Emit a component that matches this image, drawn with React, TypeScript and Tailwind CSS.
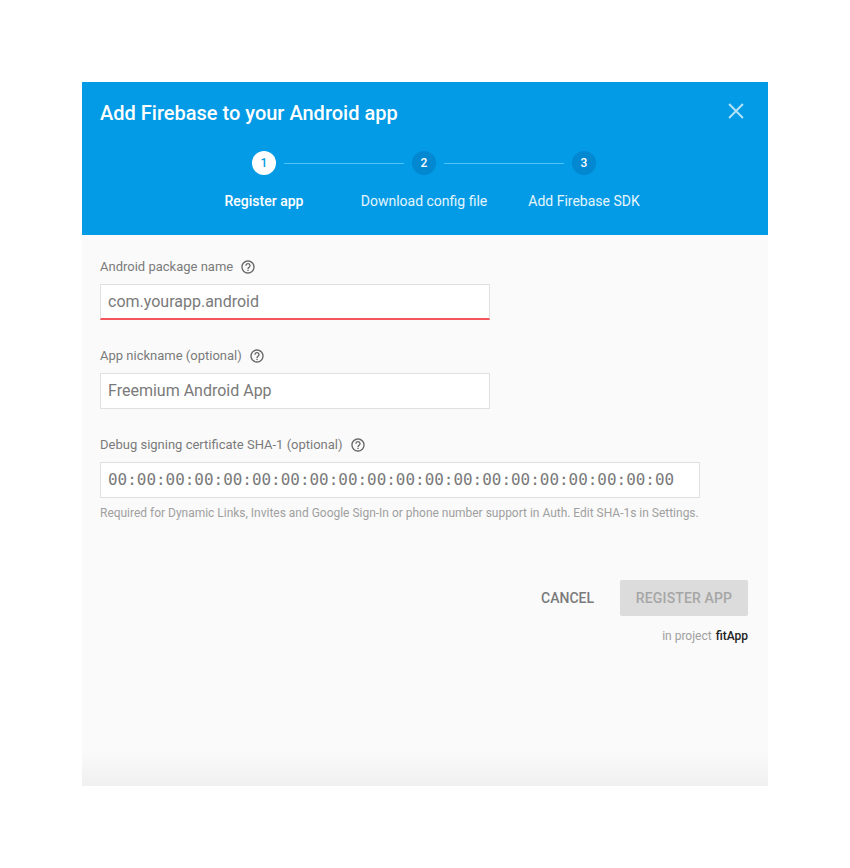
import { Fragment } from "react";

const steps = ["Register app", "Download config file", "Add Firebase SDK"];

function HelpIcon() {
  return (
    <svg viewBox="0 0 24 24" className="h-[16px] w-[16px] shrink-0 fill-[#666666]">
      <path d="M11 18h2v-2h-2v2zm1-16C6.48 2 2 6.48 2 12s4.48 10 10 10 10-4.48 10-10S17.52 2 12 2zm0 18c-4.41 0-8-3.59-8-8s3.59-8 8-8 8 3.59 8 8-3.59 8-8 8zm0-14c-2.21 0-4 1.79-4 4h2c0-1.1.9-2 2-2s2 .9 2 2c0 2-3 1.75-3 5h2c0-2.25 3-2.5 3-5 0-2.21-1.79-4-4-4z" />
    </svg>
  );
}

function Label({ text }: { text: string }) {
  return (
    <div className="flex h-[18px] items-center gap-[7px] text-[13px] leading-[18px] text-[#7a7a7a]">
      <span>{text}</span>
      <HelpIcon />
    </div>
  );
}

export default function App() {
  return (
    <div className="min-h-[868px] bg-white pt-[82px] pl-[82px] font-['Roboto',sans-serif]">
      <div className="flex h-[704px] w-[686px] flex-col bg-gradient-to-b from-[#fafafa] from-[95%] to-[#f0f0f0]">
        <div className="h-[153px] shrink-0 bg-[#039be5] text-white">
          <div className="flex items-start justify-between pt-[17px] pr-[24px] pl-[18px]">
            <h1 className="text-[20px] leading-[28px] font-medium">Add Firebase to your Android app</h1>
            <svg viewBox="0 0 15 15" className="mt-[4px] h-[16px] w-[16px] stroke-white/70 stroke-[1.9]">
              <path d="M1 1l13 13M14 1L1 14" fill="none" />
            </svg>
          </div>
          <div className="mt-[24px] mr-[2px] flex items-center justify-center">
            {steps.map((step, i) => (
              <Fragment key={step}>
                {i > 0 && <div className="mx-[8px] h-px w-[120px] bg-[#4fc3f7]" />}
                <div
                  className={
                    i === 0
                      ? "flex h-[24px] w-[24px] items-center justify-center rounded-full bg-white text-[12px] font-medium text-[#039be5]"
                      : "flex h-[24px] w-[24px] items-center justify-center rounded-full bg-[#0288d1] text-[12px] font-medium text-white"
                  }
                >
                  {i + 1}
                </div>
              </Fragment>
            ))}
          </div>
          <div className="mt-[16px] mr-[2px] flex justify-center">
            {steps.map((step, i) => (
              <div
                key={step}
                className={
                  i === 0
                    ? "w-[160px] text-center text-[14px] leading-[20px] font-medium whitespace-nowrap"
                    : "w-[160px] text-center text-[14px] leading-[20px] whitespace-nowrap text-white/90"
                }
              >
                {step}
              </div>
            ))}
          </div>
        </div>

        <div className="flex flex-col px-[18px] pt-[23px]">
          <Label text="Android package name" />
          <div className="mt-[8px] flex h-[36px] w-[390px] items-center border border-[#e0e0e0] border-b-2 border-b-[#f4555a] bg-white pl-[7px] text-[16px] text-[#7a7a7a]">
            com.yourapp.android
          </div>

          <div className="mt-[27px]">
            <Label text="App nickname (optional)" />
          </div>
          <div className="mt-[8px] flex h-[36px] w-[390px] items-center border border-[#e0e0e0] bg-white pl-[7px] text-[16px] text-[#7a7a7a]">
            Freemium Android App
          </div>

          <div className="mt-[27px]">
            <Label text="Debug signing certificate SHA-1 (optional)" />
          </div>
          <div className="mt-[8px] flex h-[36px] w-[600px] items-center border border-[#e0e0e0] bg-white pl-[7px] font-['DejaVu_Sans_Mono',monospace] text-[15.95px] text-[#7a7a7a]">
            00:00:00:00:00:00:00:00:00:00:00:00:00:00:00:00:00:00:00:00
          </div>
          <p className="mt-[7px] text-[11.98px] leading-[16px] whitespace-nowrap text-[#a0a0a0]">
            Required for Dynamic Links, Invites and Google Sign-In or phone number support in Auth. Edit SHA-1s in Settings.
          </p>

          <div className="mt-[59px] mr-[2px] flex items-center justify-end">
            <button className="mr-[26px] text-[14px] font-medium text-[#7a7a7a]">CANCEL</button>
            <button className="h-[36px] w-[128px] rounded-[2px] bg-[#dcdcdc] text-[14px] font-medium tracking-[0.14px] text-[#a6a6a6]">
              REGISTER APP
            </button>
          </div>
          <div className="mt-[12px] mr-[2px] text-right text-[12px] leading-[16px] text-[#a0a0a0]">
            in project <span className="ml-[1px] font-medium text-[#212121]">fitApp</span>
          </div>
        </div>
      </div>
    </div>
  );
}
